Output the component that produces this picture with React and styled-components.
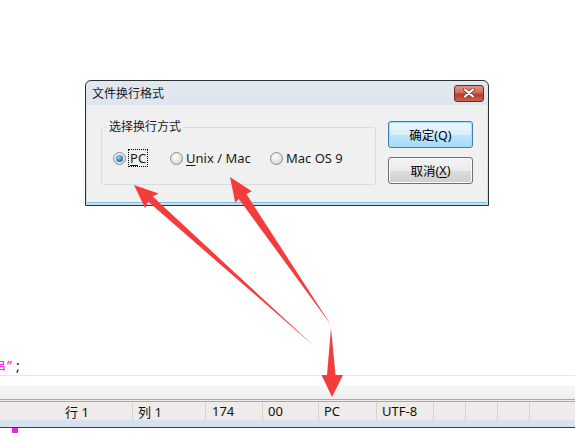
import styled, { createGlobalStyle } from "styled-components";

const GlobalStyle = createGlobalStyle`
  html, body { margin: 0; padding: 0; background: #fff; }
  body { font-family: "Noto Sans", "Noto Sans CJK SC", sans-serif; }
`;

const Screen = styled.div`
  position: relative;
  width: 575px;
  height: 433px;
  overflow: hidden;
  display: flex;
  flex-direction: column;
  background: #fff;
`;

const Desk = styled.div`
  height: 355px;
  flex: none;
  box-sizing: border-box;
  padding: 80px 0 0 85px;
`;

const Window = styled.div`
  width: 404px;
  height: 126px;
  box-sizing: border-box;
  border: 1px solid #2f2f2f;
  border-radius: 6px 6px 0 0;
  background: linear-gradient(#e0e8f1, #d1dbe8);
  display: flex;
  flex-direction: column;
  padding: 0 1px 1px;
`;

const TitleBar = styled.div`
  height: 24px;
  flex: none;
  display: flex;
  align-items: center;
  justify-content: space-between;
  padding: 0 3px 0 5px;
  font-size: 12px;
  color: #1a1a1a;
`;

const CloseButton = styled.div`
  width: 30px;
  height: 17px;
  box-sizing: border-box;
  border: 1px solid #6e2a20;
  border-radius: 3px;
  background: linear-gradient(#e2968a 0%, #d0685a 45%, #b83c2a 55%, #c8614f 100%);
  display: flex;
  align-items: center;
  justify-content: center;
`;

const Body = styled.div`
  height: 98px;
  flex: none;
  box-sizing: border-box;
  background: #f0f0f0;
  border-bottom: 1px solid #79c3de;
  display: flex;
  align-items: flex-start;
  gap: 12px;
  padding: 14px 14px 0;
`;

const GroupBox = styled.fieldset`
  margin: 0;
  width: 275px;
  box-sizing: border-box;
  border: 1px solid #d5dde3;
  border-radius: 3px;
  padding: 15px 0 18px 11px;
  min-inline-size: 0;
`;

const GroupLabel = styled.legend`
  margin-left: -6px;
  padding: 0 2px;
  font-size: 12px;
  line-height: 16px;
  color: #1a1a1a;
`;

const RadioRow = styled.div`
  display: flex;
  align-items: center;
  height: 16px;
`;

const RadioItem = styled.div`
  display: flex;
  align-items: center;
  gap: 3px;
  width: ${(p) => p.$w}px;
  font-size: 13px;
  color: #1a1a1a;
`;

const RadioDot = styled.span`
  width: 13px;
  height: 13px;
  flex: none;
  box-sizing: border-box;
  border-radius: 50%;
  border: 1px solid #8a8c8e;
  background: radial-gradient(circle at 40% 35%, #fbfbfb, #dcdcdc 70%, #c9c9c9);
  display: flex;
  align-items: center;
  justify-content: center;
  &::after {
    content: "";
    display: ${(p) => (p.$checked ? "block" : "none")};
    width: 7px;
    height: 7px;
    border-radius: 50%;
    background: radial-gradient(circle at 40% 35%, #8fd6f6, #2a86c8 55%, #0b4f8a);
  }
`;

const Focus = styled.span`
  outline: 1px dotted #000;
  outline-offset: 0;
  padding: 0 1px;
  line-height: 16px;
`;

const Key = styled.span`
  text-decoration: underline;
  text-underline-offset: 2px;
`;

const ButtonCol = styled.div`
  margin-top: 2px;
  display: flex;
  flex-direction: column;
  gap: 9px;
`;

const Button = styled.div`
  width: 85px;
  height: 27px;
  box-sizing: border-box;
  border-radius: 3px;
  display: flex;
  align-items: center;
  justify-content: center;
  font-size: 12.5px;
  color: #000;
  border: 1px solid ${(p) => (p.$default ? "#3c7fb1" : "#707070")};
  box-shadow: inset 0 0 0 1px ${(p) => (p.$default ? "#a6e0f8" : "#fbfbfb")};
  background: ${(p) =>
    p.$default
      ? "linear-gradient(#e9f6fd 0%, #dbf0fb 50%, #bee6fd 51%, #a7d9f5 100%)"
      : "linear-gradient(#f2f2f2 0%, #ebebeb 50%, #dddddd 51%, #cfcfcf 100%)"};
`;

const CodeLine = styled.div`
  height: 20px;
  flex: none;
  border-bottom: 1px solid #e6e6e6;
  display: flex;
  align-items: center;
  margin-left: -8px;
  font-size: 14px;
`;

const Str = styled.span`
  color: #ee22ee;
  font-family: "Noto Sans CJK SC", sans-serif;
`;

const Quote = styled.span`
  color: #ee22ee;
  margin-left: 1px;
`;

const Semi = styled.span`
  color: #111;
  margin-left: 4px;
`;

const Spacer = styled.div`
  height: 9px;
  flex: none;
`;

const GrayBand = styled.div`
  height: 14px;
  flex: none;
  background: linear-gradient(#f8f8f9, #eeeef0);
`;

const DoubleRule = styled.div`
  height: 1px;
  flex: none;
  border-top: 1px solid #a8a8a8;
  border-bottom: 1px solid #a8a8a8;
  background: #ececec;
`;

const StatusBar = styled.div`
  height: 18px;
  flex: none;
  display: flex;
  background: #efebe8;
  font-size: 13px;
  color: #111;
`;

const Cell = styled.div`
  width: ${(p) => p.$w}px;
  flex: none;
  box-sizing: border-box;
  border-right: 1px solid #d6d2cf;
  padding-left: ${(p) => p.$pad ?? 5}px;
  display: flex;
  align-items: center;
  white-space: pre;
`;

const BlueStrip = styled.div`
  height: 7px;
  flex: none;
  background: #d6e2ef;
  border-bottom: 1px solid #3c3c3c;
`;

const Bottom = styled.div`
  flex: 1;
  padding-left: 12px;
`;

const Caret = styled.div`
  width: 6px;
  height: 6px;
  background: #ee22ee;
`;

const Overlay = styled.svg`
  position: absolute;
  left: 0;
  top: 0;
  pointer-events: none;
`;

const ARROWS = [
  "134,185 158.6,193.5 152.7,196.6 314,346 148.1,201.6 145.2,208.5",
  "230,177 251.8,191.2 246.3,194 331,325 238.9,199 235.2,202.4",
  "331,328 335.5,375 343,375 332,397 321.5,375 327,375",
];

const CELLS = [
  { w: 133, pad: 65, text: "行 1" },
  { w: 73, text: "列 1" },
  { w: 57, pad: 6, text: "174" },
  { w: 56, text: "00" },
  { w: 58, text: "PC" },
  { w: 57, text: "UTF-8" },
  { w: 32 },
  { w: 32 },
  { w: 32 },
];

export default function App() {
  return (
    <Screen>
      <GlobalStyle />
      <Desk>
        <Window>
          <TitleBar>
            <span>文件换行格式</span>
            <CloseButton>
              <svg width="12" height="10" viewBox="0 0 12 10">
                <path d="M2 1.5 L10 8.5 M10 1.5 L2 8.5" stroke="#7a2e24" strokeWidth="3.6" strokeLinecap="round" />
                <path d="M2 1.5 L10 8.5 M10 1.5 L2 8.5" stroke="#fff" strokeWidth="2.2" strokeLinecap="round" />
              </svg>
            </CloseButton>
          </TitleBar>
          <Body>
            <GroupBox>
              <GroupLabel>选择换行方式</GroupLabel>
              <RadioRow>
                <RadioItem $w={57}>
                  <RadioDot $checked />
                  <Focus>
                    <Key>P</Key>C
                  </Focus>
                </RadioItem>
                <RadioItem $w={100}>
                  <RadioDot />
                  <span>
                    <Key>U</Key>nix / Mac
                  </span>
                </RadioItem>
                <RadioItem $w={90}>
                  <RadioDot />
                  <span>Mac OS 9</span>
                </RadioItem>
              </RadioRow>
            </GroupBox>
            <ButtonCol>
              <Button $default>确定(Q)</Button>
              <Button>
                取消(<Key>X</Key>)
              </Button>
            </ButtonCol>
          </Body>
        </Window>
      </Desk>
      <CodeLine>
        <Str>串</Str>
        <Quote>”</Quote>
        <Semi>;</Semi>
      </CodeLine>
      <Spacer />
      <GrayBand />
      <DoubleRule />
      <StatusBar>
        {CELLS.map((c, i) => (
          <Cell key={i} $w={c.w} $pad={c.pad}>
            {c.text}
          </Cell>
        ))}
      </StatusBar>
      <BlueStrip />
      <Bottom>
        <Caret />
      </Bottom>
      <Overlay width="575" height="433" viewBox="0 0 575 433">
        {ARROWS.map((pts) => (
          <polygon key={pts} points={pts} fill="#f53c3c" />
        ))}
      </Overlay>
    </Screen>
  );
}
